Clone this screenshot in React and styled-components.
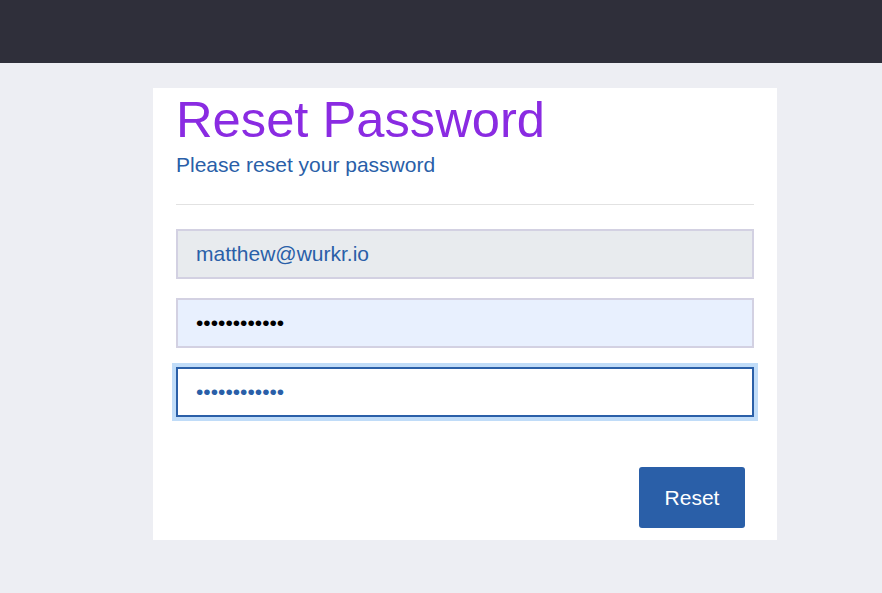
import React from "react";
import styled, { createGlobalStyle } from "styled-components";

const Global = createGlobalStyle`
  html, body { margin: 0; padding: 0; }
  body {
    background: #edeef3;
    font-family: "Liberation Sans", Arial, sans-serif;
  }
`;

const TopBar = styled.header`
  height: 63px;
  background: #2f2f3a;
`;

const Main = styled.main`
  padding: 25px 0 0 153px;
`;

const Card = styled.section`
  width: 578px;
  background: #fff;
  padding: 0 23px 12px 23px;
`;

const Title = styled.h1`
  margin: 0;
  padding-top: 3px;
  font-size: 50.7px;
  font-weight: 400;
  line-height: 58px;
  color: #8a2be2;
`;

const Sub = styled.p`
  margin: 2px 0 0;
  font-size: 21px;
  line-height: 28px;
  color: #2a5fa8;
`;

const Divider = styled.hr`
  margin: 25px 0 24px;
  border: 0;
  border-top: 1px solid #e2e2e2;
`;

const Form = styled.form`
  display: flex;
  flex-direction: column;
  gap: 19px;
`;

const Input = styled.input`
  box-sizing: border-box;
  width: 100%;
  height: 50px;
  padding: 0 18px;
  border: 2px solid #d3d1e2;
  background: ${(p) => p.$bg || "#fff"};
  color: ${(p) => p.$ink || "#2a5fa8"};
  font-family: "Liberation Sans", Arial, sans-serif;
  font-size: 21px;
  outline: none;
  &:focus {
    border-color: #2a5fa8;
    outline: 4px solid #c0dcf8;
  }
`;

const Actions = styled.div`
  display: flex;
  justify-content: flex-end;
  padding: 31px 9px 0 0;
`;

const Button = styled.button`
  width: 106px;
  height: 61px;
  border: 0;
  border-radius: 3px;
  background: #2a5fa8;
  color: #fff;
  font-family: "Liberation Sans", Arial, sans-serif;
  font-size: 21px;
  cursor: pointer;
`;

export default function App() {
  return (
    <>
      <Global />
      <TopBar />
      <Main>
        <Card>
          <Title>Reset Password</Title>
          <Sub>Please reset your password</Sub>
          <Divider />
          <Form onSubmit={(e) => e.preventDefault()}>
            <Input type="email" defaultValue="matthew@wurkr.io" $bg="#e8ebee" readOnly />
            <Input type="password" defaultValue="abcdefghijkl" $bg="#e8f0fe" $ink="#000" />
            <Input type="password" defaultValue="abcdefghijkl" autoFocus />
            <Actions>
              <Button type="submit">Reset</Button>
            </Actions>
          </Form>
        </Card>
      </Main>
    </>
  );
}
